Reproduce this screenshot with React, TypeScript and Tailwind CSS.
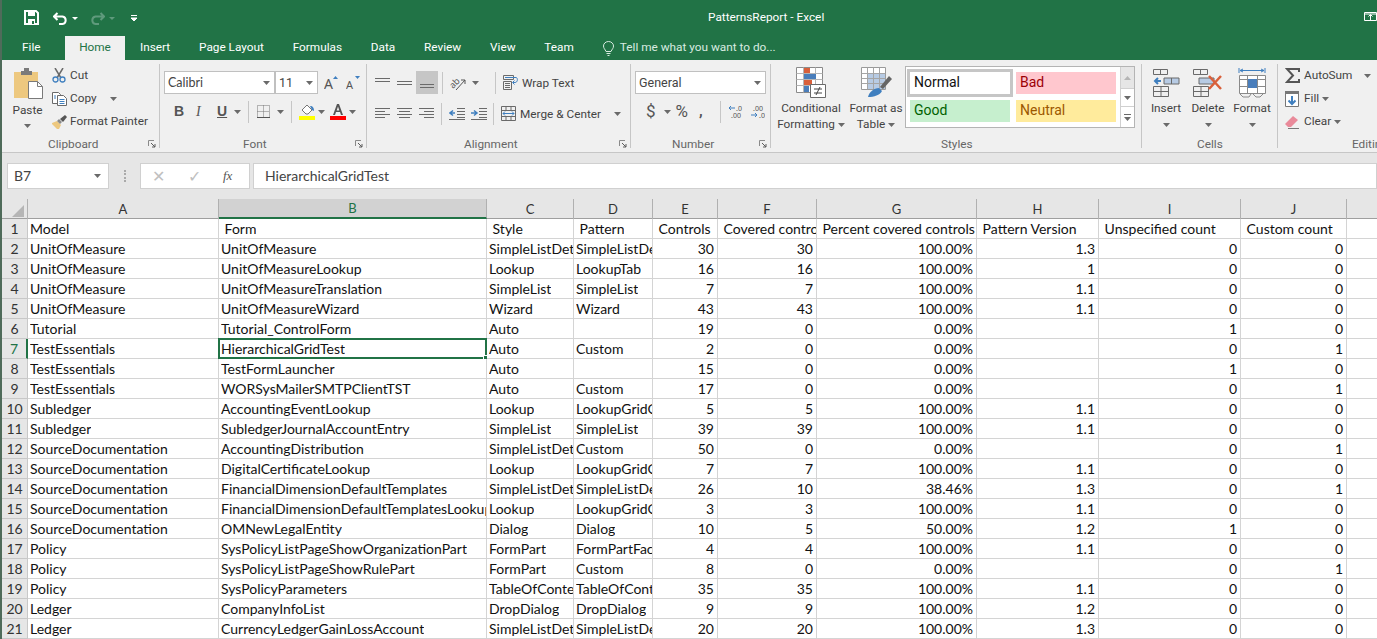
import type { ReactNode } from "react";

const ui = "font-['Roboto','Noto_Sans',sans-serif]";
const cellFont = "font-['Lato','Carlito',sans-serif]";

const tabs = ["Insert", "Page Layout", "Formulas", "Data", "Review", "View", "Team"];
const columns = ["A", "B", "C", "D", "E", "F", "G", "H", "I", "J"];
const widths = "grid grid-cols-[26px_191px_268px_87px_79px_65px_99px_160px_122px_142px_106px_30px] grid-rows-[20px]";

const rows = [
  ["Model", "\u00a0Form", "\u00a0Style", "\u00a0Pattern", "\u00a0Controls", "\u00a0Covered controls", "\u00a0Percent covered controls", "\u00a0Pattern Version", "\u00a0Unspecified count", "\u00a0Custom count"],
  ["UnitOfMeasure", "UnitOfMeasure", "SimpleListDetails", "SimpleListDetails", "30", "30", "100.00%", "1.3", "0", "0"],
  ["UnitOfMeasure", "UnitOfMeasureLookup", "Lookup", "LookupTab", "16", "16", "100.00%", "1", "0", "0"],
  ["UnitOfMeasure", "UnitOfMeasureTranslation", "SimpleList", "SimpleList", "7", "7", "100.00%", "1.1", "0", "0"],
  ["UnitOfMeasure", "UnitOfMeasureWizard", "Wizard", "Wizard", "43", "43", "100.00%", "1.1", "0", "0"],
  ["Tutorial", "Tutorial_ControlForm", "Auto", "", "19", "0", "0.00%", "", "1", "0"],
  ["TestEssentials", "HierarchicalGridTest", "Auto", "Custom", "2", "0", "0.00%", "", "0", "1"],
  ["TestEssentials", "TestFormLauncher", "Auto", "", "15", "0", "0.00%", "", "1", "0"],
  ["TestEssentials", "WORSysMailerSMTPClientTST", "Auto", "Custom", "17", "0", "0.00%", "", "0", "1"],
  ["Subledger", "AccountingEventLookup", "Lookup", "LookupGridControl", "5", "5", "100.00%", "1.1", "0", "0"],
  ["Subledger", "SubledgerJournalAccountEntry", "SimpleList", "SimpleList", "39", "39", "100.00%", "1.1", "0", "0"],
  ["SourceDocumentation", "AccountingDistribution", "SimpleListDetails", "Custom", "50", "0", "0.00%", "", "0", "1"],
  ["SourceDocumentation", "DigitalCertificateLookup", "Lookup", "LookupGridControl", "7", "7", "100.00%", "1.1", "0", "0"],
  ["SourceDocumentation", "FinancialDimensionDefaultTemplates", "SimpleListDetails", "SimpleListDetails", "26", "10", "38.46%", "1.3", "0", "1"],
  ["SourceDocumentation", "FinancialDimensionDefaultTemplatesLookup", "Lookup", "LookupGridControl", "3", "3", "100.00%", "1.1", "0", "0"],
  ["SourceDocumentation", "OMNewLegalEntity", "Dialog", "Dialog", "10", "5", "50.00%", "1.2", "1", "0"],
  ["Policy", "SysPolicyListPageShowOrganizationPart", "FormPart", "FormPartFactBox", "4", "4", "100.00%", "1.1", "0", "0"],
  ["Policy", "SysPolicyListPageShowRulePart", "FormPart", "Custom", "8", "0", "0.00%", "", "0", "1"],
  ["Policy", "SysPolicyParameters", "TableOfContents", "TableOfContents", "35", "35", "100.00%", "1.1", "0", "0"],
  ["Ledger", "CompanyInfoList", "DropDialog", "DropDialog", "9", "9", "100.00%", "1.2", "0", "0"],
  ["Ledger", "CurrencyLedgerGainLossAccount", "SimpleListDetails", "SimpleListDetails", "20", "20", "100.00%", "1.3", "0", "0"],
];

function Caret({ className = "" }: { className?: string }) {
  return (
    <svg width="7" height="4" viewBox="0 0 7 4" className={"shrink-0 " + className}>
      <path d="M0 0h7L3.5 4z" fill="#6a6a6a" />
    </svg>
  );
}

function Launcher() {
  return (
    <svg width="8" height="8" viewBox="0 0 8 8" className="shrink-0">
      <path d="M.5 6V.5H6" fill="none" stroke="#8a8a8a" />
      <path d="M3 3l4 4M4 7h3V4" fill="none" stroke="#5a5a5a" />
    </svg>
  );
}

function Sep({ className = "" }: { className?: string }) {
  return <div className={"w-px h-[22px] bg-[#c6c6c6] shrink-0 " + className} />;
}

function Group({ width, label, children, labelPad, launcher = true, border = true }: { width: string; label: string; children: ReactNode; labelPad: string; launcher?: boolean; border?: boolean }) {
  return (
    <div className={width + " h-[84px] shrink-0 " + (border ? "border-r border-[#c6c6c6]" : "")}>
      <div className="h-[72px]">{children}</div>
      <div className={"h-[12px] flex items-start text-[11.8px] leading-[16px] text-[#666] " + labelPad}>
        <span className="flex-1 whitespace-nowrap">{label}</span>
        {launcher && <div className="pt-[4px] pr-[3px]"><Launcher /></div>}
      </div>
    </div>
  );
}

function Lines({ ys, spans }: { ys: number[]; spans: [number, number][] }) {
  return (
    <svg width="16" height="14" viewBox="0 0 16 14" className="shrink-0">
      {ys.map((y, i) => (
        <path key={i} d={`M${spans[i][0]} ${y + 0.5}H${spans[i][1]}`} stroke="#6a6a6a" />
      ))}
    </svg>
  );
}

function SmallRow({ icon, text, caret, iconWidth = "w-[18px]", className = "" }: { icon: ReactNode; text: string; caret?: string; iconWidth?: string; className?: string }) {
  return (
    <div className={"flex items-center h-[23px] " + className}>
      <div className={iconWidth + " shrink-0 flex items-center"}>{icon}</div>
      <span className="text-[11.8px] text-[#444] whitespace-nowrap">{text}</span>
      {caret && <Caret className={caret} />}
    </div>
  );
}

function BigButton({ icon, lines, width }: { icon: ReactNode; lines: ReactNode[]; width: string }) {
  return (
    <div className={width + " flex flex-col items-center shrink-0"}>
      <div className="h-[37px] pb-[3px] flex items-end justify-center">{icon}</div>
      {lines.map((l, i) => (
        <div key={i} className="h-[16px] flex items-center justify-center text-[11.8px] text-[#444] whitespace-nowrap">{l}</div>
      ))}
    </div>
  );
}

function Combo({ text, width, font = "" }: { text: string; width: string; font?: string }) {
  return (
    <div className={width + " h-[23px] bg-white border border-[#c0c0c0] flex items-center pl-[3px] pr-[4px] text-[12.5px] text-[#444] " + font}>
      <span className="flex-1 pt-[1px]">{text}</span>
      <Caret />
    </div>
  );
}

function StyleChip({ text, box }: { text: string; box: string }) {
  return <div className={"h-[22px] w-[100px] flex items-center pl-[4px] pb-[2px] text-[14px] " + box}>{text}</div>;
}

function Save() {
  return (
    <svg width="15" height="15" viewBox="0 0 15 15">
      <path d="M1 1h11l2 2v11H1z" fill="none" stroke="#fff" strokeWidth="2" />
      <path d="M4 1h7v5H4zM4 9h7v5H4z" fill="#fff" />
      <path d="M8 11h2v3H8z" fill="#217346" />
    </svg>
  );
}

function Undo() {
  return (
    <svg width="15" height="13" viewBox="0 0 15 13">
      <path d="M1 4.5h8.5a3.8 3.8 0 0 1 0 7.5H6M4.5 1L1 4.5 4.5 8" fill="none" stroke="#fff" strokeWidth="2" />
    </svg>
  );
}

function Redo() {
  return (
    <svg width="15" height="13" viewBox="0 0 15 13">
      <path d="M14 4.5H5.5a3.8 3.8 0 0 0 0 7.5H9M10.5 1L14 4.5 10.5 8" fill="none" stroke="#5f9a7c" strokeWidth="2" />
    </svg>
  );
}

function Paste() {
  return (
    <svg width="30" height="32" viewBox="0 0 30 32">
      <path d="M0 4h24v26H0z" fill="#edc87f" />
      <path d="M7 3h3V0h5v3h3v4H7z" fill="#7a7a7a" />
      <path d="M14.5 13.5h9l5 5v12h-14z" fill="#fff" stroke="#7a7a7a" />
      <path d="M23.5 13.5v5h5" fill="none" stroke="#7a7a7a" />
    </svg>
  );
}

function Cut() {
  return (
    <svg width="15" height="15" viewBox="0 0 15 15">
      <path d="M3 0l6 10M11 0L5 10" stroke="#6a6a6a" strokeWidth="1.5" />
      <circle cx="3.5" cy="11.5" r="2.5" fill="none" stroke="#3f7fbf" strokeWidth="1.3" />
      <circle cx="10.5" cy="11.5" r="2.5" fill="none" stroke="#3f7fbf" strokeWidth="1.3" />
    </svg>
  );
}

function Copy() {
  return (
    <svg width="15" height="14" viewBox="0 0 15 14">
      <path d="M.5.5h6l2 2v9h-8z" fill="#fff" stroke="#6a6a6a" />
      <path d="M5.5 3.5h6l3 3v7h-9z" fill="#fff" stroke="#6a6a6a" />
      <path d="M7.5 7.5h5M7.5 9.5h5M7.5 11.5h5M2 4h2M2 6h2" stroke="#3f7fbf" />
    </svg>
  );
}

function Painter() {
  return (
    <svg width="15" height="15" viewBox="0 0 15 15">
      <path d="M0 9l5-2 4 4-2 4H5L0 10z" fill="#edc87f" />
      <path d="M5 7l2-2 3 3-2 2z" fill="#8a8a8a" />
      <path d="M8 5l5-4 2 2-4 5z" fill="#555" />
    </svg>
  );
}

function GrowA({ up }: { up: boolean }) {
  return (
    <svg width="16" height="14" viewBox="0 0 16 14">
      <text x="0" y="13" fontSize={up ? 14 : 11} fill="#555" fontFamily="Noto Sans, sans-serif">A</text>
      <path d={up ? "M9 3l2.5-3L14 3z" : "M9 0h5l-2.5 3z"} fill="#3f7fbf" />
    </svg>
  );
}

function OrientIcon() {
  return (
    <svg width="16" height="16" viewBox="0 0 16 16">
      <text x="0" y="11" fontSize="9" fill="#555" transform="rotate(-45 5 9)" fontFamily="Noto Sans, sans-serif">ab</text>
      <path d="M6 15L15 5M11 5h4v4" fill="none" stroke="#555" />
    </svg>
  );
}

function BorderIcon() {
  return (
    <svg width="13" height="13" viewBox="0 0 13 13">
      <path d="M.5.5h12v12H.5zM6.5.5v12M.5 6.5h12" fill="none" stroke="#777" strokeDasharray="1 1" />
      <path d="M0 12.5h13" stroke="#555" />
    </svg>
  );
}

function FillIcon() {
  return (
    <svg width="17" height="17" viewBox="0 0 17 17">
      <path d="M3 7l5-5 5 5-4 4H7z" fill="#fff" stroke="#777" />
      <path d="M11 3c3 0 4 2 4 5l-2-1z" fill="#3f7fbf" />
      <path d="M0 13h16v4H0z" fill="#ff0" />
    </svg>
  );
}

function FontColor() {
  return (
    <svg width="16" height="17" viewBox="0 0 16 17">
      <path d="M3 12L7 1h2l4 11h-2L10 9H6l-1 3zM6.7 7.5h2.6L8 3.5z" fill="#555" />
      <path d="M0 13h16v4H0z" fill="#f00" />
    </svg>
  );
}

function WrapIcon() {
  return (
    <svg width="15" height="15" viewBox="0 0 15 15">
      <path d="M.5.5h10v4H.5zM.5 6.5h8v8h-8zM2 8.5h5M2 10.5h5M2 12.5h5" fill="none" stroke="#6a6a6a" />
      <path d="M2 2.5h11c2 0 2 5-1 5H10M11.5 5.5L9.5 7.5l2 2" fill="none" stroke="#3f7fbf" />
    </svg>
  );
}

function MergeIcon() {
  return (
    <svg width="15" height="15" viewBox="0 0 15 15">
      <path d="M.5.5h14v14H.5zM.5 4.5h14M.5 10.5h14M5 .5v4M10 .5v4M5 10.5v4M10 10.5v4" fill="none" stroke="#6a6a6a" />
      <path d="M2 7.5h11M4 5.5l-2 2 2 2M11 5.5l2 2-2 2" fill="none" stroke="#3f7fbf" />
    </svg>
  );
}

function IndentIcon({ flip }: { flip?: boolean }) {
  return (
    <svg width="16" height="12" viewBox="0 0 16 12">
      <path d="M8 .5h8M8 3.5h8M8 6.5h8M8 9.5h8M0 11.5h16" stroke="#6a6a6a" />
      {flip ? <path d="M0 5h5M3 2.5L6 5 3 7.5" fill="none" stroke="#3f7fbf" strokeWidth="1.5" /> : <path d="M6 5H1M4 2.5L1 5l3 2.5" fill="none" stroke="#3f7fbf" strokeWidth="1.5" />}
    </svg>
  );
}

function DecimalIcon({ more }: { more?: boolean }) {
  return (
    <svg width="15" height="14" viewBox="0 0 15 14">
      {more ? (
        <>
          <text x="3" y="6" fontSize="7" fill="#555" fontFamily="Noto Sans, sans-serif">.00</text>
          <text x="9" y="13" fontSize="7" fill="#555" fontFamily="Noto Sans, sans-serif">.0</text>
          <path d="M1 10h6M5 8l2 2-2 2" fill="none" stroke="#3f7fbf" />
        </>
      ) : (
        <>
          <text x="8" y="6" fontSize="7" fill="#555" fontFamily="Noto Sans, sans-serif">.0</text>
          <text x="3" y="13" fontSize="7" fill="#555" fontFamily="Noto Sans, sans-serif">.00</text>
          <path d="M7 3H1M3 1L1 3l2 2" fill="none" stroke="#3f7fbf" />
        </>
      )}
    </svg>
  );
}

function CondIcon() {
  return (
    <svg width="30" height="31" viewBox="0 0 30 31">
      <path d="M.5.5h26v25H.5z" fill="#fff" stroke="#8a8a8a" />
      <path d="M.5 6.5h26M.5 12.5h26M.5 18.5h26M7.5.5v25M19.5.5v25" stroke="#b5b5b5" />
      <path d="M8 1h6v5H8z" fill="#d9603b" />
      <path d="M8 7h12v5H8z" fill="#4a7ebb" />
      <path d="M8 13h8v5H8z" fill="#d9603b" />
      <path d="M8 19h5v6H8z" fill="#4a7ebb" />
      <path d="M14.5 17.5h15v13h-15z" fill="#fff" stroke="#6a6a6a" />
      <path d="M18 22h8M18 26h8M24 20l-4 8" stroke="#444" />
    </svg>
  );
}

function TableIcon() {
  return (
    <svg width="31" height="31" viewBox="0 0 31 31">
      <path d="M.5.5h24v22H.5z" fill="#fff" stroke="#9a9a9a" />
      <path d="M7 7h17v15H7z" fill="#b7cbe4" />
      <path d="M.5 6.5h24M.5 11.5h24M.5 16.5h24M6.5.5v22M12.5.5v22M18.5.5v22" stroke="#a5a5a5" />
      <path d="M19 20l9-11 3 3-9 10z" fill="#666" />
      <path d="M7 30c1-5 6-9 11-9l3 3c-2 4-8 6-14 6z" fill="#3f7fbf" />
    </svg>
  );
}

function InsertIcon() {
  return (
    <svg width="27" height="29" viewBox="0 0 27 29">
      <path d="M.5.5h14v5H.5zM7.5.5v5M.5 17.5h15v10H.5zM.5 22.5h15M8 17.5v10" fill="none" stroke="#6a6a6a" />
      <path d="M11 9h15v6H11z" fill="#b7cbe4" stroke="#6a6a6a" />
      <path d="M18.5 9v6" stroke="#6a6a6a" />
      <path d="M8 12H2M5 9l-3 3 3 3" fill="none" stroke="#3f7fbf" strokeWidth="2" />
    </svg>
  );
}

function DeleteIcon() {
  return (
    <svg width="30" height="29" viewBox="0 0 30 29">
      <path d="M.5.5h14v5H.5zM7.5.5v5M.5 17.5h15v10H.5zM.5 22.5h15M8 17.5v10" fill="none" stroke="#6a6a6a" />
      <path d="M6 9h15v6H6z" fill="#b7cbe4" stroke="#6a6a6a" />
      <path d="M16 7l12 13M28 7L16 20" stroke="#d9603b" strokeWidth="2.5" />
    </svg>
  );
}

function FormatIcon() {
  return (
    <svg width="29" height="30" viewBox="0 0 29 30">
      <path d="M1 0v5M27 0v5M2 2.5h24M5 1L2 2.5 5 4M23 1l3 1.5L23 4" fill="none" stroke="#3f7fbf" />
      <path d="M1.5 7.5h26v18h-26zM1.5 11.5h26M1.5 18.5h26M9.5 7.5v18M19.5 7.5v18" fill="#fff" stroke="#8a8a8a" />
      <path d="M10 11h9v9h-9z" fill="#4a7ebb" />
      <path d="M2 26l3 3h6l2-3M15 26l3 3h4l3-3" fill="none" stroke="#8a8a8a" />
    </svg>
  );
}

function Sigma() {
  return (
    <svg width="15" height="15" viewBox="0 0 15 15">
      <path d="M14 4V1H2l6 6.5L2 14h12v-3" fill="none" stroke="#555" strokeWidth="2" />
    </svg>
  );
}

function FillDown() {
  return (
    <svg width="14" height="16" viewBox="0 0 14 16">
      <path d="M.5.5h13v15H.5z" fill="#fff" stroke="#777" />
      <path d="M0 0h14v3H0z" fill="#777" />
      <path d="M7 5v8M3.5 9.5L7 13l3.5-3.5" fill="none" stroke="#3f7fbf" strokeWidth="2" />
    </svg>
  );
}

function Eraser() {
  return (
    <svg width="14" height="14" viewBox="0 0 14 14">
      <path d="M0 9l8-8 5 4-7 7H3z" fill="#e98a9a" />
      <path d="M3 13.5h11" stroke="#777" />
    </svg>
  );
}

function Bulb() {
  return (
    <svg width="11" height="15" viewBox="0 0 11 15">
      <path d="M3 10.5C2 8 .5 7.500.5 5a5 4.500 0 0 1 10 0c0 2.500-1.500 3-2.500 5.500zM3.500 12.500h4M4.500 14.500h2" fill="none" stroke="#d8ebe0" />
    </svg>
  );
}

function TitleBar() {
  return (
    <div className="h-[36px] bg-[#217346] flex items-center">
      <div className="ml-[22px] mt-[-1px]"><Save /></div>
      <div className="ml-[14px] flex items-center gap-[4px]">
        <Undo />
        <svg width="6" height="3" viewBox="0 0 6 3"><path d="M0 0h6L3 3z" fill="#fff" /></svg>
      </div>
      <div className="ml-[12px] flex items-center gap-[4px]">
        <Redo />
        <svg width="6" height="3" viewBox="0 0 6 3"><path d="M0 0h6L3 3z" fill="#5f9a7c" /></svg>
      </div>
      <svg width="6" height="6" viewBox="0 0 6 6" className="ml-[16px]">
        <path d="M0 .5h6M0 3h6L3 6z" stroke="#fff" strokeWidth="1" fill="#fff" />
      </svg>
      <span className="ml-[571px] text-[11.8px] text-white whitespace-nowrap">PatternsReport - Excel</span>
      <svg width="13" height="9" viewBox="0 0 13 9" className="ml-auto mt-[-4px]">
        <path d="M.5.5h12v8H.5zM6.5 8V3M4.5 4.5l2-2 2 2M.5 2h12" fill="none" stroke="#fff" />
      </svg>
    </div>
  );
}

function TabStrip() {
  return (
    <div className="h-[24px] bg-[#217346] flex items-stretch text-[11.8px] text-white">
      <div className="w-[63px] pl-[20px] flex items-center">File</div>
      <div className="w-[60px] bg-[#f0f0f0] text-[#217346] flex items-center justify-center">Home</div>
      <div className="flex items-center gap-[28.8px] ml-[15px]">
        {tabs.map((t) => (
          <span key={t}>{t}</span>
        ))}
      </div>
      <div className="flex items-center ml-[29px] text-[#d8ebe0]">
        <Bulb />
        <span className="ml-[6px]">Tell me what you want to do...</span>
      </div>
    </div>
  );
}

function Ribbon() {
  return (
    <div className={"h-[93px] bg-[#f0f0f0] border-b border-[#c6c6c6] pt-[4px] flex overflow-hidden " + ui}>
      <Group width="w-[158px]" label="Clipboard" labelPad="pl-[46px]">
        <div className="flex">
          <div className="w-[50px] flex flex-col items-center pl-[1px]">
            <div className="pt-[4px] pl-[3px]"><Paste /></div>
            <span className="text-[11.8px] text-[#444] h-[16px] mt-[2px] leading-[16px]">Paste</span>
            <Caret className="mt-[6px]" />
          </div>
          <div>
            <SmallRow icon={<Cut />} text="Cut" />
            <SmallRow icon={<Copy />} text="Copy" caret="ml-[13px]" />
            <SmallRow icon={<Painter />} text="Format Painter" />
          </div>
        </div>
      </Group>
      <Group width="w-[207px]" label="Font" labelPad="pl-[83px]">
        <div className="pt-[7px] pl-[4px]">
          <div className="flex items-center">
            <Combo text="Calibri" width="w-[111px]" font="font-['Lato',sans-serif]" />
            <Combo text="11" width="w-[43px]" />
            <div className="ml-[6px]"><GrowA up /></div>
            <div className="ml-[6px]"><GrowA up={false} /></div>
          </div>
          <div className="flex items-center h-[23px] mt-[6px] text-[14px] text-[#555]">
            <span className="ml-[10px] w-[22px] font-bold font-['Liberation_Sans',sans-serif]">B</span>
            <span className="w-[21px] italic font-['Liberation_Serif',serif]">I</span>
            <span className="w-[17px] font-bold underline font-['Liberation_Sans',sans-serif]">U</span>
            <Caret />
            <Sep className="ml-[7px]" />
            <div className="ml-[8px]"><BorderIcon /></div>
            <Caret className="ml-[7px]" />
            <Sep className="ml-[7px]" />
            <div className="ml-[7px]"><FillIcon /></div>
            <Caret className="ml-[2px]" />
            <div className="ml-[5px]"><FontColor /></div>
            <Caret className="ml-[3px]" />
          </div>
        </div>
      </Group>
      <Group width="w-[264px]" label="Alignment" labelPad="pl-[97px]">
        <div className="pt-[7px] pl-[8px]">
          <div className="flex items-center h-[23px]">
            <Lines ys={[2, 5]} spans={[[0, 15], [0, 15]]} />
            <div className="ml-[6px]"><Lines ys={[5, 8]} spans={[[0, 15], [0, 15]]} /></div>
            <div className="ml-[3px] w-[22px] h-[23px] bg-[#c6c6c6] flex items-center justify-center"><Lines ys={[8, 11]} spans={[[1, 15], [1, 15]]} /></div>
            <Sep className="ml-[4px]" />
            <div className="ml-[7px]"><OrientIcon /></div>
            <Caret className="ml-[6px]" />
            <Sep className="ml-[16px]" />
            <div className="ml-[7px] w-[19px]"><WrapIcon /></div>
            <span className="text-[11.8px] text-[#444] whitespace-nowrap mt-[2px]">Wrap Text</span>
          </div>
          <div className="flex items-center h-[23px] mt-[8px]">
            <Lines ys={[1, 4, 7, 10]} spans={[[0, 15], [0, 10], [0, 15], [0, 10]]} />
            <div className="ml-[6px]"><Lines ys={[1, 4, 7, 10]} spans={[[0, 15], [2, 13], [0, 15], [2, 13]]} /></div>
            <div className="ml-[6px]"><Lines ys={[1, 4, 7, 10]} spans={[[0, 15], [5, 15], [0, 15], [5, 15]]} /></div>
            <Sep className="ml-[6px]" />
            <div className="ml-[7px]"><IndentIcon /></div>
            <div className="ml-[6px]"><IndentIcon flip /></div>
            <Sep className="ml-[6px]" />
            <div className="ml-[7px] w-[19px]"><MergeIcon /></div>
            <span className="text-[11.8px] text-[#444] whitespace-nowrap mt-[2px]">Merge &amp; Center</span>
            <Caret className="ml-[13px]" />
          </div>
        </div>
      </Group>
      <Group width="w-[140px]" label="Number" labelPad="pl-[41px]">
        <div className="pt-[7px] pl-[4px]">
          <Combo text="General" width="w-[131px]" />
          <div className="flex items-center h-[23px] mt-[6px] text-[#555]">
            <span className="ml-[11px] text-[17px]">$</span>
            <Caret className="ml-[8px]" />
            <span className="ml-[5px] text-[17px]">%</span>
            <span className="ml-[11px] text-[15px] font-bold leading-[15px]">,</span>
            <Sep className="ml-[17px]" />
            <div className="ml-[7px]"><DecimalIcon /></div>
            <div className="ml-[7px]"><DecimalIcon more /></div>
          </div>
        </div>
      </Group>
      <Group width="w-[371px]" label="Styles" labelPad="pl-[170px]" launcher={false}>
        <div className="flex">
          <BigButton
            width="w-[72px] ml-[4px]"
            icon={<CondIcon />}
            lines={["Conditional", <span className="flex items-center gap-[3px]">Formatting<Caret /></span>]}
          />
          <BigButton
            width="w-[52px] ml-[3px]"
            icon={<TableIcon />}
            lines={["Format as", <span className="flex items-center gap-[3px]">Table<Caret /></span>]}
          />
          <div className="ml-[3px] mt-[2px] w-[230px] h-[62px] bg-white border border-[#b4b4b4] flex shrink-0">
            <div className="grid grid-cols-[106px_100px] content-start w-[214px] pl-[1px] gap-x-[3px]">
              <div className="h-[28px] mt-[2px] border-[3px] border-[#c6c6c6] bg-white flex items-center pl-[4px] pb-[2px] text-[14px] text-[#111]">Normal</div>
              <div className="mt-[5px]"><StyleChip text="Bad" box="bg-[#ffc7ce] text-[#9c0006]" /></div>
              <div className="pl-[3px] mt-[3px]"><StyleChip text="Good" box="bg-[#c6efce] text-[#006100]" /></div>
              <div className="mt-[3px]"><StyleChip text="Neutral" box="bg-[#ffeb9c] text-[#9c5700]" /></div>
            </div>
            <div className="w-[14px] flex flex-col border-l border-[#d0d0d0]">
              <div className="h-[21px] bg-[#e6e6e6] flex items-center justify-center">
                <svg width="7" height="4" viewBox="0 0 7 4"><path d="M0 4h7L3.5 0z" fill="#b5b5b5" /></svg>
              </div>
              <div className="h-[19px] border-y border-[#d0d0d0] flex items-center justify-center"><Caret /></div>
              <div className="flex-1 flex flex-col items-center justify-center gap-[2px]">
                <div className="w-[7px] h-px bg-[#6a6a6a]" />
                <Caret />
              </div>
            </div>
          </div>
        </div>
      </Group>
      <Group width="w-[136px]" label="Cells" labelPad="pl-[55px]" launcher={false}>
        <div className="flex">
          <BigButton width="w-[42px] ml-[3px]" icon={<InsertIcon />} lines={["Insert", <Caret />]} />
          <BigButton width="w-[42px]" icon={<DeleteIcon />} lines={["Delete", <Caret />]} />
          <BigButton width="w-[44px] ml-[1px]" icon={<FormatIcon />} lines={["Format", <Caret />]} />
        </div>
      </Group>
      <Group width="w-[110px]" label="Editing" labelPad="pl-[74px]" launcher={false} border={false}>
        <div className="pl-[7px]">
          <SmallRow icon={<Sigma />} text="AutoSum" caret="ml-[12px]" iconWidth="w-[19px]" />
          <SmallRow icon={<FillDown />} text="Fill" caret="ml-[3px]" iconWidth="w-[19px]" />
          <SmallRow icon={<Eraser />} text="Clear" caret="ml-[3px]" iconWidth="w-[19px]" />
        </div>
      </Group>
    </div>
  );
}

function FormulaBar() {
  return (
    <div className={"h-[46px] bg-[#e6e6e6] flex items-center pl-[5px] text-[#444] text-[14px] " + cellFont}>
      <div className="w-[102px] h-[26px] bg-white border border-[#d0d0d0] flex items-center pl-[6px] pr-[7px] leading-[16px]">
        <span className="flex-1">B7</span>
        <Caret />
      </div>
      <div className="ml-[15px] w-[2px] h-[12px] border-l-2 border-dotted border-[#aaa]" />
      <div className="ml-[14px] w-[110px] h-[26px] bg-white border border-[#d0d0d0] flex items-center text-[#c0c0c0]">
        <span className="ml-[11px] text-[16px] leading-none">✕</span>
        <span className="ml-[23px] text-[16px] leading-none">✓</span>
        <span className="ml-[22px] italic text-[#555] font-['Liberation_Serif',serif] text-[13px]">fx</span>
      </div>
      <div className="ml-[3px] flex-1 h-[26px] bg-white border border-[#d0d0d0] flex items-center pl-[11px] leading-[16px] pb-[1px]">HierarchicalGridTest</div>
    </div>
  );
}

function Sheet() {
  return (
    <div className={"bg-white " + cellFont}>
      <div className={widths + " h-[20px] bg-[#e6e6e6] text-[13px] leading-[16px] text-[#333] border-b border-[#9f9f9f]"}>
        <div className="border-r border-[#b0b0b0] flex items-end justify-end">
          <svg width="12" height="12" viewBox="0 0 12 12" className="mb-[2px] mr-[3px]"><path d="M12 0v12H0z" fill="#b5b5b5" /></svg>
        </div>
        {columns.map((c) => (
          <div
            key={c}
            className={
              "flex items-center justify-center border-r border-[#b0b0b0] " +
              (c === "B" ? "bg-[#d2d2d2] text-[#217346] border-b-2 border-b-[#217346]" : "")
            }
          >
            {c}
          </div>
        ))}
        <div />
      </div>
      {rows.map((row, r) => (
        <div key={r} className={widths + " h-[20px] text-[14px] leading-[16px] text-[#111]"}>
          <div
            className={
              "bg-[#e6e6e6] flex items-center justify-center border-b border-[#c8c8c8] text-[#333] " +
              (r === 6 ? "bg-[#d2d2d2] text-[#217346] border-r-2 border-r-[#217346]" : "border-r border-[#b0b0b0]")
            }
          >
            {r + 1}
          </div>
          {row.map((v, c) => {
            const numeric = r > 0 && c >= 4;
            return (
              <div
                key={c}
                className={
                  "relative min-w-0 border-r border-b border-[#d4d4d4] flex items-center whitespace-nowrap pl-[2px] " +
                  (numeric ? "justify-end pr-[3px]" : "")
                }
              >
                <span className={numeric ? "" : "block min-w-0 overflow-hidden"}>{v}</span>
                {r === 6 && c === 1 && (
                  <div className="absolute left-[-1px] top-[-1px] right-[-1px] bottom-[-1px] border-2 border-[#217346]">
                    <div className="absolute right-[-3px] bottom-[-3px] w-[5px] h-[5px] bg-[#217346] border border-white" />
                  </div>
                )}
              </div>
            );
          })}
          <div className="border-b border-[#d4d4d4]" />
        </div>
      ))}
    </div>
  );
}

export default function App() {
  return (
    <div className="w-screen h-screen overflow-hidden bg-[#e6e6e6] border-l-2 border-[#4f6b5a]">
      <div className={ui}>
        <TitleBar />
        <TabStrip />
      </div>
      <Ribbon />
      <FormulaBar />
      <Sheet />
    </div>
  );
}
